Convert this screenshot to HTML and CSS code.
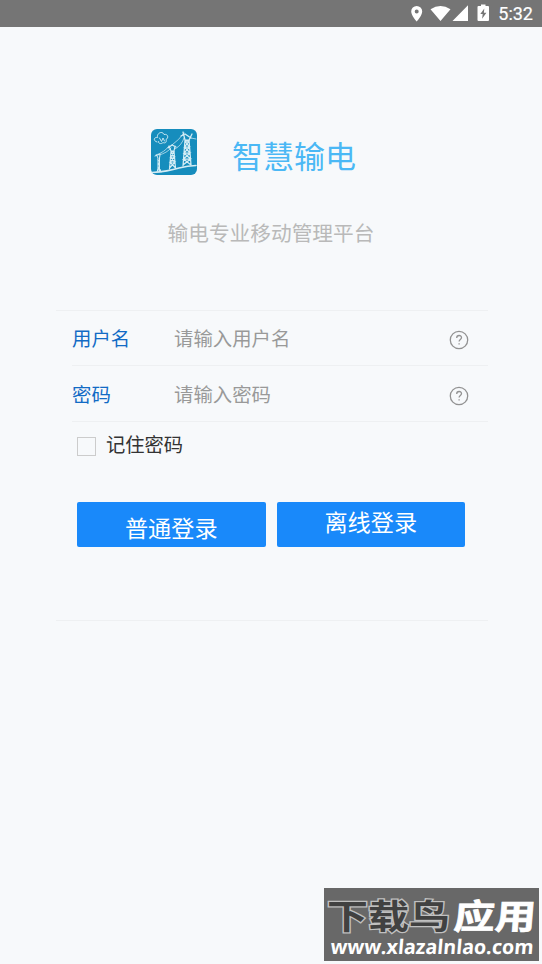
FILE: index.html
```html
<!DOCTYPE html>
<html lang="zh-CN">
<head>
<meta charset="utf-8">
<title>智慧输电</title>
<link rel="stylesheet" href="styles.css">
</head>
<body>
<header class="status">
  <svg width="97" height="27" viewBox="400 0 97 27" class="status-icons">
    <path fill="#fff" fill-rule="evenodd" d="M416.7 6a5.5 5.5 0 0 0-5.5 5.5c0 4 5.5 10 5.5 10s5.5-6 5.5-10a5.5 5.5 0 0 0-5.5-5.500zm0 3.500a2 2 0 1 1 0 4 2 2 0 0 1 0-4z"/>
    <path fill="#fff" d="M430.500 9.200q10-6.600 20 0L440.500 21zM468 5.300V21h-15.500z"/>
    <path fill="#fff" fill-rule="evenodd" d="M481 4.600h4.500v1.500h2.500q1 0 1 1V20q0 1-1 1h-9.500q-1 0-1-1V7.100q0-1 1-1h2.500zM484.300 8.500l-4 5.500h2.400l-.6 4.700 4.300-6h-2.500z"/>
  </svg>
  <span class="time">5:32</span>
</header>
<main class="page">
  <div class="brand">
    <svg class="logo" width="46" height="46" viewBox="0 0 46 46" fill="none" stroke="#d5edf5" stroke-linecap="round">
      <rect width="46" height="46" rx="6" fill="#168dbd" stroke="none"/>
      <path stroke-width=".9" d="M6 13c-4-1-3.500-5 .5-4.500C5.500 4 11.500 1.500 13 5.500c4-1 5 3.500 2 5 1 3-1 4-3 3-2 2-5 1-4.500-1M8.500 9l2 3.500L12 9l1.500 3"/>
      <path stroke-width="1.500" d="M1 43.500q16-1 27-4.500 9-2.400 17-2.500"/>
      <path stroke-width="1" d="M4 27l5-2M5.500 26L7 29v13M9 26l-.5 3v13M7 31l1.500 2L7 35l1.500 2L7 39l1.500 2M6 43l1-3h2l1 3"/>
      <path stroke-width="1.150" d="M17 19l4-3 4 2M18 17l2 5h3l1-5M20 22l-1.500 18M23 22l1.500 17M20 23h3l-3.500 5h4l-4.500 5h5L18.500 39M20 23l3.500 5M19.500 28l4.500 5M19 33l5.500 6"/>
      <path stroke-width="1.250" d="M30 7l4-2 6 4M32 3l2 8h4l3-6M34 11l-2 26M38 11l2 25M34 12h4l-4.500 6h5L33 24h6l-6.500 6h7L32 36M34 12l4.500 6M33.500 18l5.500 6M33 24l6.500 6M32.500 30l7.500 6"/>
      <path stroke-width=".7" d="M5 26q9-3 13-9M8 26q8-2 12-7M21 16Q28 11 33 4M24 20q7-4 9-11M40 9l5 1"/>
    </svg>
    <h1>智慧输电</h1>
  </div>
  <p class="subtitle">输电专业移动管理平台</p>
  <form class="form">
    <div class="row first">
      <span class="label">用户名</span><span class="hint">请输入用户名</span>
      <svg class="help" viewBox="0 0 20 20"><circle cx="10" cy="10" r="8.700"/><path d="M7.700 8c0-3.300 4.800-3.200 4.800-.4 0 1.900-2.400 1.900-2.400 4M10.100 13.200v1.300"/></svg>
    </div>
    <div class="row">
      <span class="label">密码</span><span class="hint">请输入密码</span>
      <svg class="help" viewBox="0 0 20 20"><circle cx="10" cy="10" r="8.700"/><path d="M7.700 8c0-3.300 4.800-3.200 4.800-.4 0 1.900-2.400 1.900-2.400 4M10.100 13.200v1.300"/></svg>
    </div>
    <div class="remember"><span class="box"></span><span class="remember-text">记住密码</span></div>
    <div class="actions">
      <div class="btn normal">普通登录</div>
      <div class="btn offline">离线登录</div>
    </div>
  </form>
</main>
<aside class="watermark">
  <svg width="215" height="73" viewBox="0 0 215 73">
    <g class="wm-name" transform="translate(3 41) scale(1 .84)">
      <text class="wm-dark" x="0" y="0">下载鸟</text>
      <text class="wm-light" transform="translate(126 0) skewX(-4)" x="0" y="0">应用</text>
    </g>
    <text class="wm-url" transform="translate(6 66) skewX(-5)" x="0" y="0" textLength="203" lengthAdjust="spacingAndGlyphs">www.xlazalnlao.com</text>
  </svg>
</aside>
</body>
</html>
```
FILE: styles.css
```css
* { box-sizing: border-box; }
body {
  margin: 0;
  height: 964px;
  overflow: hidden;
  position: relative;
  background: #f7f9fb;
  font-family: "Noto Sans CJK SC", sans-serif;
}
.status {
  height: 27px;
  background: #757575;
  display: flex;
  justify-content: flex-end;
  padding-right: 9px;
}
.status-icons { flex: none; }
.time {
  width: 36px;
  font: 400 18px/28px Roboto, sans-serif;
  color: #fff;
  -webkit-text-stroke: .2px #fff;
  text-align: right;
  white-space: nowrap;
}
.brand {
  display: flex;
  padding: 101.5px 0 0 151px;
  height: 159px;
}
.logo { flex: none; }
h1 {
  margin: 4px 0 0 35px;
  font-size: 31px;
  line-height: 44px;
  font-weight: 400;
  color: #4bb8f5;
}
.subtitle {
  margin: 31px 0 0;
  text-align: center;
  font-size: 20.7px;
  line-height: 30px;
  color: #b9b9b9;
}
.form {
  margin: 63px 54px 0 56px;
  height: 311px;
  border-top: 1px solid #eef0f2;
  border-bottom: 1px solid #eef0f2;
}
.row {
  display: flex;
  align-items: center;
  height: 56px;
  margin-left: 16px;
  padding-right: 19px;
  border-bottom: 1px solid #eef0f2;
  font-size: 19.4px;
  line-height: 28px;
}
.row.first { height: 55px; }
.row.first .label, .row.first .hint { margin-bottom: 1px; }
.label { width: 102px; color: #126bc5; }
.hint { flex: 1; color: #999; }
.help {
  width: 20px;
  height: 20px;
  margin-top: 4px;
  fill: none;
  stroke: #929292;
  stroke-width: 1.3;
}
.remember {
  display: flex;
  align-items: center;
  height: 44px;
  padding-left: 21px;
  font-size: 19.3px;
  line-height: 28px;
  color: #333;
}
.box {
  width: 19px;
  height: 19px;
  margin: 5px 10px 0 0;
  border: 1px solid #ccc;
}
.actions { display: flex; gap: 11px; padding: 36px 0 0 21px; }
.btn {
  width: 188.500px;
  height: 45px;
  border-radius: 2px;
  background: #1989fa;
  color: #fff;
  font-size: 23.200px;
  text-align: center;
}
.normal { line-height: 50px; }
.offline { line-height: 38px; }
.watermark {
  position: absolute;
  left: 324px;
  top: 888px;
  width: 215px;
  height: 73px;
  background: #686868;
}
.watermark svg { display: block; }
.wm-name { font-size: 41px; font-weight: 700; }
.wm-dark { fill: #414141; stroke: #c0c0c0; stroke-width: 3px; paint-order: stroke; }
.wm-light { fill: #fff; stroke: #fff; stroke-width: .8px; }
.wm-url { font: 700 20px "Open Sans", sans-serif; fill: #fff; }
```
